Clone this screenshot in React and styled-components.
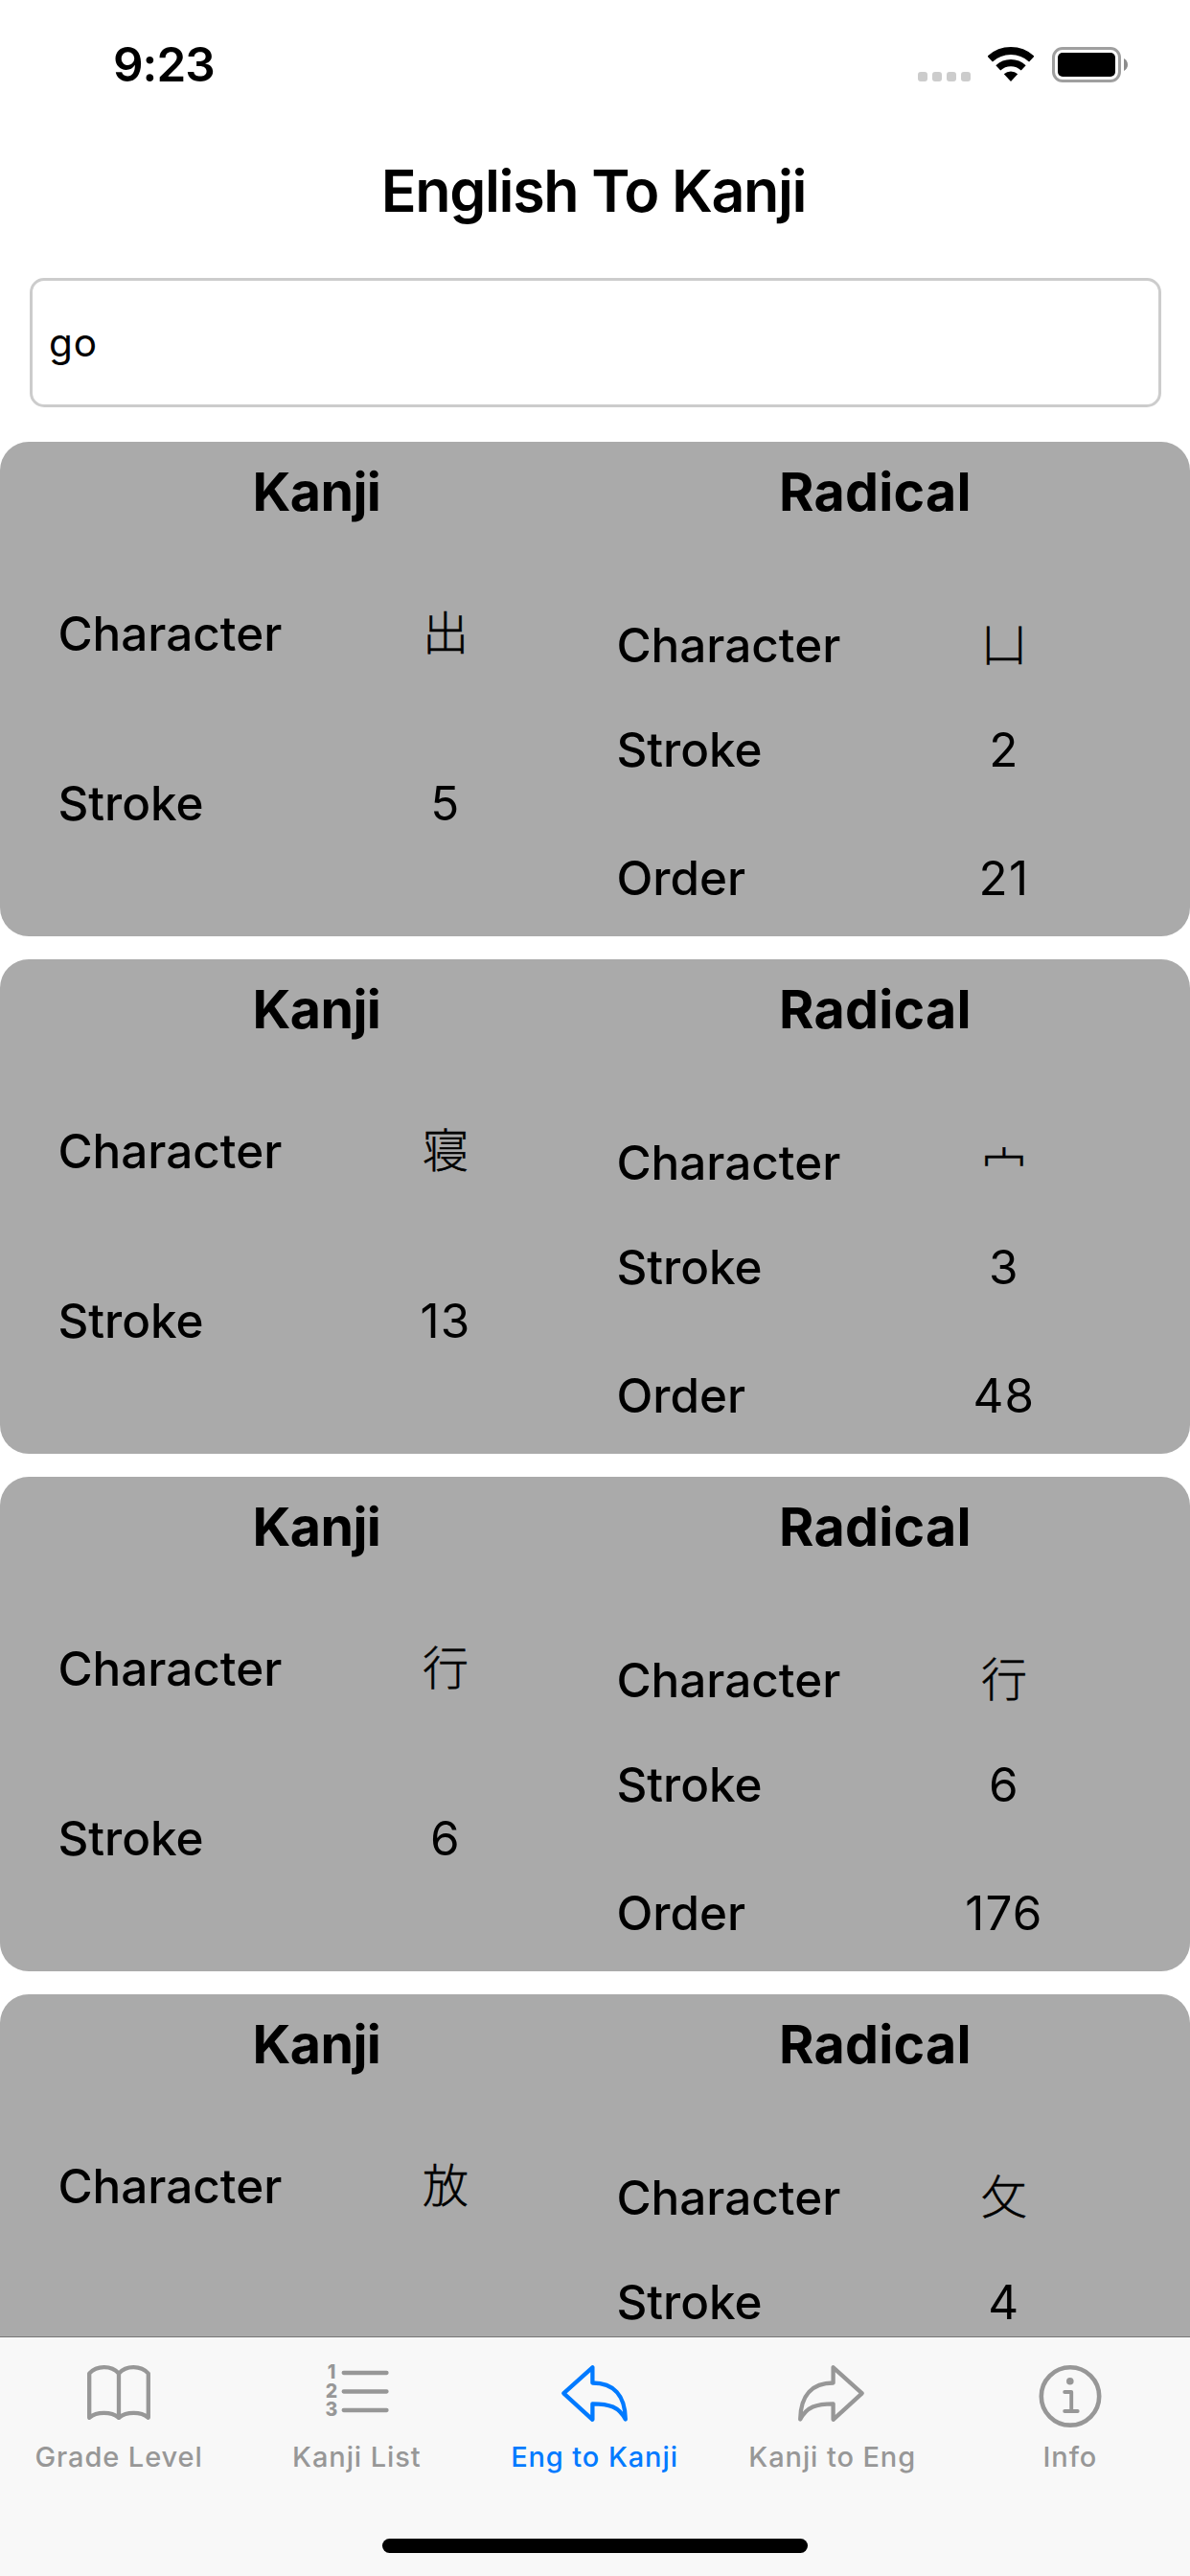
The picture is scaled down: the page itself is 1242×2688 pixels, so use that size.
import React from "react";
import styled, { createGlobalStyle } from "styled-components";

const GlobalStyle = createGlobalStyle`
  *, *::before, *::after { box-sizing: border-box; }
  html, body { margin: 0; padding: 0; background: #fff; }
  body {
    font-family: Inter, "Liberation Sans", "Noto Sans CJK JP", sans-serif;
    color: #000;
  }
`;

const Screen = styled.div`
  display: flex;
  flex-direction: column;
  width: 1242px;
  height: 2688px;
  overflow: hidden;
  background: #fff;
`;

const StatusBar = styled.header`
  display: flex;
  justify-content: space-between;
  align-items: flex-start;
  height: 159px;
  padding: 37px 65px 0 118px;
`;

const Clock = styled.time`
  font-size: 49.4px;
  line-height: 60px;
  font-weight: 600;
  letter-spacing: -0.97px;
`;

const StatusIcons = styled.div`
  display: flex;
  align-items: flex-start;
  height: 37px;
  margin-top: 12px;
`;

const SignalDots = styled.div`
  display: flex;
  gap: 5px;
  margin: 26px 18px 0 0;
`;

const SignalDot = styled.span`
  width: 10px;
  height: 10px;
  border-radius: 3px;
  background: #ccc;
`;

const WifiIcon = styled.svg`
  display: block;
  width: 48px;
  height: 36px;
  margin-right: 19px;
`;

const BatteryIcon = styled.svg`
  display: block;
  width: 79px;
  height: 37px;
`;

const Title = styled.h1`
  margin: 0;
  padding-right: 3px;
  font-size: 61px;
  line-height: 80px;
  font-weight: 600;
  letter-spacing: -1.4px;
  text-align: center;
`;

const SearchField = styled.input`
  flex: none;
  display: block;
  width: 1181px;
  height: 135px;
  margin: 51px 30px 36px 31px;
  padding: 0 17px;
  border: 3px solid #ccc;
  border-radius: 15px;
  background: #fff;
  color: #000;
  outline: none;
  font-family: inherit;
  font-size: 40.5px;
  letter-spacing: 0.8px;
`;

const ResultList = styled.main`
  flex: 1;
  min-height: 0;
  display: flex;
  flex-direction: column;
  gap: 24px;
  overflow: hidden;
`;

const Card = styled.article`
  flex: none;
  display: flex;
  gap: 44px;
  height: 516px;
  padding: 18px 59px 0 60.4px;
  border-radius: 30px;
  background: #aaa;
`;

const Panel = styled.section`
  width: 539px;
`;

const PanelTitle = styled.h2`
  margin: 0 0 ${(p) => p.$gap}px;
  padding-left: 1px;
  font-size: 55.5px;
  line-height: 68px;
  font-weight: 700;
  letter-spacing: ${(p) => p.$tracking}px;
  text-align: center;
`;

const Field = styled.div`
  display: grid;
  grid-template-columns: 270px 269px;
  height: 60px;
  margin-bottom: ${(p) => p.$gap || 0}px;
  font-size: 49.4px;
  line-height: 60px;
`;

const FieldLabel = styled.span`
  font-weight: 500;
`;

const NumberValue = styled.span`
  text-align: center;
  letter-spacing: 1.2px;
`;

const GlyphValue = styled.span`
  text-align: center;
  font-family: "Noto Sans CJK JP", sans-serif;
  font-size: 48px;
  line-height: 53px;
  font-weight: 300;
  -webkit-text-stroke: 0.5px #000;
`;

const TabBar = styled.nav`
  position: relative;
  flex: none;
  display: flex;
  flex-direction: column;
  height: 250px;
  margin-top: -1px;
  border-top: 1px solid rgba(0, 0, 0, 0.3);
  background: #f8f8f8;
  background-clip: padding-box;
`;

const Tabs = styled.div`
  display: grid;
  grid-template-columns: repeat(5, 1fr);
  height: 210px;
  padding: 29px 1px 0 0;
`;

const Tab = styled.a`
  display: flex;
  flex-direction: column;
  align-items: center;
  color: ${(p) => (p.$active ? "#007aff" : "#979797")};
`;

const TabIcon = styled.svg`
  display: block;
  width: ${(p) => p.$w}px;
  height: 66px;
  overflow: visible;
  fill: none;
  stroke: currentColor;
  stroke-width: 4.3;
  stroke-linecap: round;
  stroke-linejoin: round;
`;

const ListDigit = styled.text`
  fill: currentColor;
  stroke: none;
  font-size: 19.5px;
  font-weight: 800;
  text-anchor: middle;
`;

const TabLabel = styled.span`
  margin-top: 9.5px;
  font-size: 29px;
  line-height: 40px;
  font-weight: 500;
  letter-spacing: 0.9px;
`;

const HomeIndicator = styled.div`
  width: 444px;
  height: 15px;
  margin: 0 auto;
  border-radius: 8px;
  background: #000;
`;

const results = [
  { kanji: "出", strokes: 5, radical: "凵", radicalStrokes: 2, order: 21 },
  { kanji: "寝", strokes: 13, radical: "宀", radicalStrokes: 3, order: 48 },
  { kanji: "行", strokes: 6, radical: "行", radicalStrokes: 6, order: 176 },
  { kanji: "放", strokes: 8, radical: "攵", radicalStrokes: 4, order: 66 },
];

function GlyphField({ value, gap }) {
  return (
    <Field $gap={gap}>
      <FieldLabel>Character</FieldLabel>
      <GlyphValue lang="ja">{value}</GlyphValue>
    </Field>
  );
}

function NumberField({ label, value, gap }) {
  return (
    <Field $gap={gap}>
      <FieldLabel>{label}</FieldLabel>
      <NumberValue>{value}</NumberValue>
    </Field>
  );
}

function ResultCard({ item }) {
  return (
    <Card>
      <Panel>
        <PanelTitle $gap={84} $tracking={-0.58}>Kanji</PanelTitle>
        <GlyphField value={item.kanji} gap={117} />
        <NumberField label="Stroke" value={item.strokes} />
      </Panel>
      <Panel>
        <PanelTitle $gap={96} $tracking={0.26}>Radical</PanelTitle>
        <GlyphField value={item.radical} gap={49} />
        <NumberField label="Stroke" value={item.radicalStrokes} gap={74} />
        <NumberField label="Order" value={item.order} />
      </Panel>
    </Card>
  );
}

const BookIcon = () => (
  <TabIcon $w={66} viewBox="0 0 66 66">
    <path d="M2.2 8.6C10 0.2 25 -0.2 33 8.6C41 -0.2 56 0.2 63.8 8.6V54.8C56 48.2 41 48.2 33 54.8C25 48.2 10 48.2 2.2 54.8Z" />
    <path d="M33 8.6V54.8" />
  </TabIcon>
);

const NumberedListIcon = () => (
  <TabIcon $w={66} viewBox="-1 0 66 66">
    <path d="M18.7 8H63.5M18.7 27.5H63.5M18.7 47H63.5" />
    <ListDigit x="6" y="14.2">1</ListDigit>
    <ListDigit x="6" y="33.9">2</ListDigit>
    <ListDigit x="6" y="53.4">3</ListDigit>
  </TabIcon>
);

const arrowPath =
  "M32.4 2.3V18.5C54 18.5 66.5 31 66.8 56.6C60 43.5 50 40.3 32.4 40.3V56.8L2.3 29.3Z";

const ReplyIcon = () => (
  <TabIcon $w={69} viewBox="0 0 69 66">
    <path d={arrowPath} />
  </TabIcon>
);

const ForwardIcon = () => (
  <TabIcon $w={69} viewBox="0 0 69 66">
    <path d={arrowPath} transform="translate(68 0) scale(-1 1)" />
  </TabIcon>
);

const InfoIcon = () => (
  <TabIcon $w={66} viewBox="0 0 66 66">
    <circle cx="33" cy="32.4" r="30.2" strokeWidth="4.6" />
    <circle cx="32.8" cy="16.7" r="3.8" fill="currentColor" stroke="none" />
    <path d="M27.2 28H34.2V48M27.2 48H40.7" strokeWidth="3.9" />
  </TabIcon>
);

const tabs = [
  { label: "Grade Level", Icon: BookIcon },
  { label: "Kanji List", Icon: NumberedListIcon },
  { label: "Eng to Kanji", Icon: ReplyIcon, active: true },
  { label: "Kanji to Eng", Icon: ForwardIcon },
  { label: "Info", Icon: InfoIcon },
];

export default function App() {
  return (
    <Screen>
      <GlobalStyle />
      <StatusBar>
        <Clock>9:23</Clock>
        <StatusIcons>
          <SignalDots>
            {[0, 1, 2, 3].map((n) => (
              <SignalDot key={n} />
            ))}
          </SignalDots>
          <WifiIcon viewBox="0 0 48 36" fill="none" stroke="#000">
            <path d="M2.2 12.6A32 32 0 0 1 45.8 12.6" strokeWidth="8" />
            <path d="M10.8 21.8A19.4 19.4 0 0 1 37.2 21.8" strokeWidth="7.2" />
            <path d="M16.8 28.3A10.5 10.5 0 0 1 31.2 28.3L24 36Z" fill="#000" stroke="none" />
          </WifiIcon>
          <BatteryIcon viewBox="0 0 79 37">
            <rect x="1.5" y="1.5" width="69" height="34" rx="9.5" fill="none" stroke="#9f9f9f" strokeWidth="3" />
            <rect x="6" y="6" width="60" height="25" rx="5" fill="#000" />
            <path d="M75 12C80.3 14.5 80.3 22.5 75 25Z" fill="#8c8c8c" />
          </BatteryIcon>
        </StatusIcons>
      </StatusBar>
      <Title>English To Kanji</Title>
      <SearchField type="text" defaultValue="go" aria-label="Search" />
      <ResultList>
        {results.map((item) => (
          <ResultCard key={item.kanji} item={item} />
        ))}
      </ResultList>
      <TabBar>
        <Tabs>
          {tabs.map(({ label, Icon, active }) => (
            <Tab key={label} $active={active}>
              <Icon />
              <TabLabel>{label}</TabLabel>
            </Tab>
          ))}
        </Tabs>
        <HomeIndicator />
      </TabBar>
    </Screen>
  );
}
